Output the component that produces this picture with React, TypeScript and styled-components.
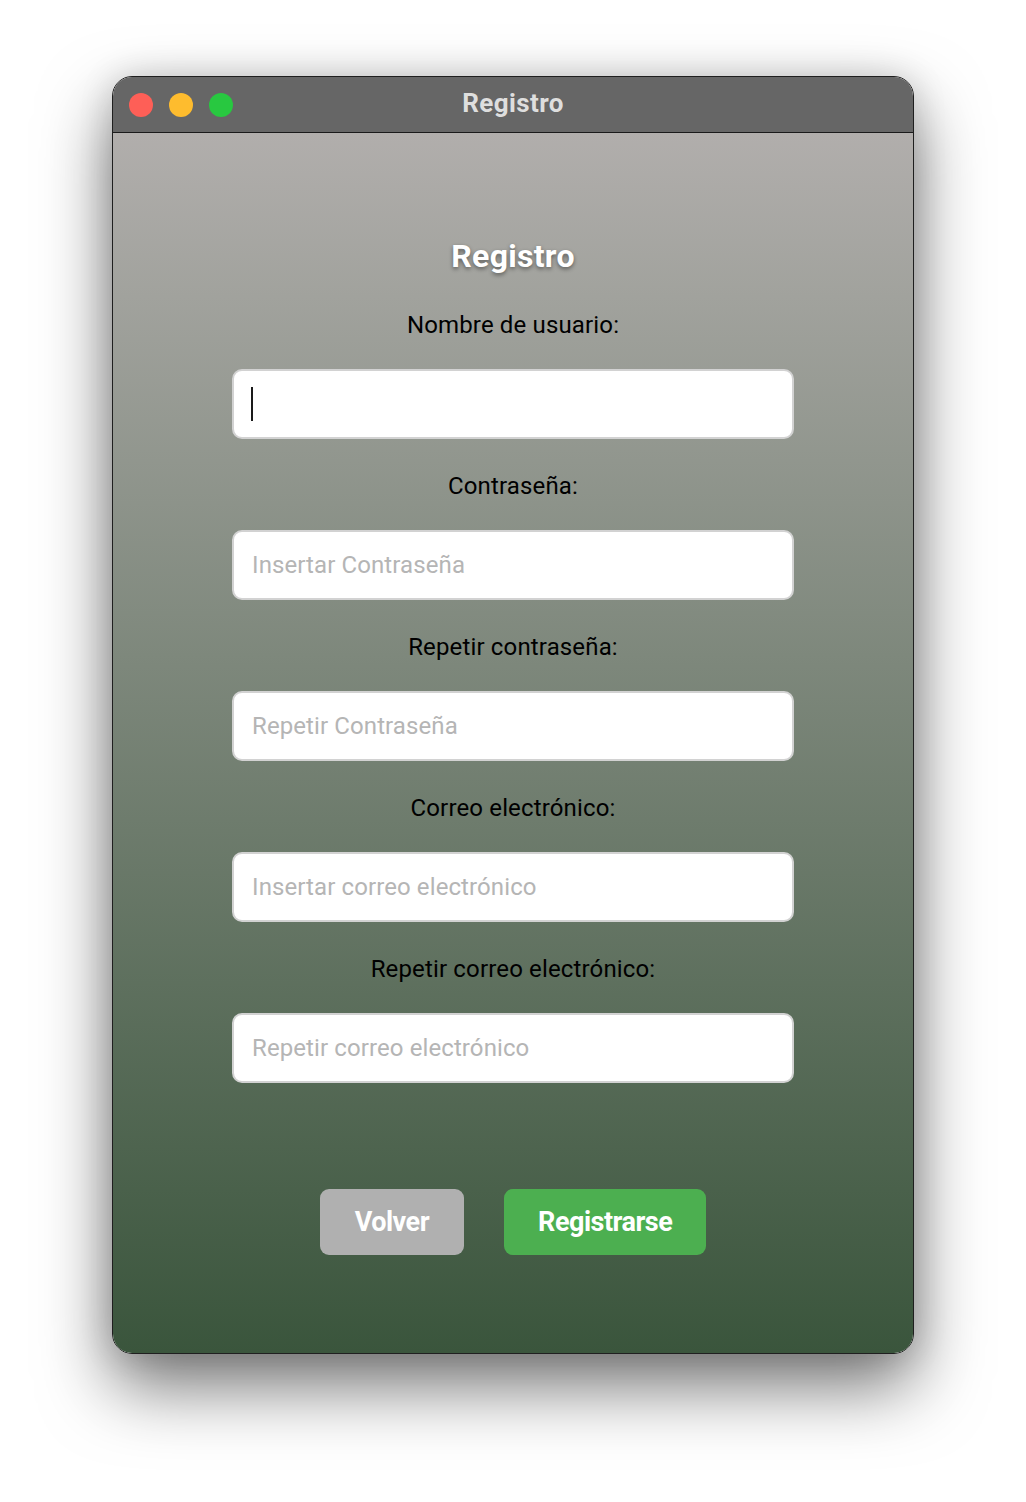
import * as React from "react";
import styled, { createGlobalStyle } from "styled-components";

const GlobalStyle = createGlobalStyle`
  html, body {
    margin: 0;
    padding: 0;
    background: #ffffff;
  }
  body {
    font-family: Roboto, "Liberation Sans", sans-serif;
  }
`;

const Desktop = styled.div`
  width: 1026px;
  height: 1502px;
  padding: 76px 0 0 112px;
  box-sizing: border-box;
`;

const Window = styled.div`
  width: 802px;
  height: 1278px;
  display: flex;
  flex-direction: column;
  border-radius: 20px;
  overflow: hidden;
  box-sizing: border-box;
  border: 1px solid #1f1f1f;
  box-shadow: inset 0 0 0 1px rgba(255, 255, 255, 0.18),
    0 32px 70px rgba(0, 0, 0, 0.55), 0 0 34px rgba(0, 0, 0, 0.14);
`;

const TitleBar = styled.div`
  height: 56px;
  flex-shrink: 0;
  display: grid;
  grid-template-columns: 1fr auto 1fr;
  align-items: center;
  background: #666666;
  border-bottom: 1px solid #1a1a1a;
  box-sizing: border-box;
`;

const Lights = styled.div`
  display: flex;
  gap: 16px;
  padding-left: 16px;
`;

const Light = styled.span<{ $color: string }>`
  width: 24px;
  height: 24px;
  border-radius: 50%;
  background: ${(p) => p.$color};
`;

const WindowTitle = styled.div`
  margin-bottom: 4px;
  font-size: 26px;
  font-weight: 700;
  letter-spacing: 0.4px;
  color: #dedede;
`;

const Body = styled.div`
  flex: 1;
  display: flex;
  flex-direction: column;
  align-items: center;
  padding-top: 103px;
  background: linear-gradient(180deg, #b1aeac 0%, #3a553c 100%);
`;

const Heading = styled.h1`
  margin: 0 0 34px;
  font-size: 32px;
  line-height: 40px;
  font-weight: 700;
  letter-spacing: 0.3px;
  color: #ffffff;
  text-shadow: 0 2px 4px rgba(0, 0, 0, 0.45);
`;

const Field = styled.div`
  display: flex;
  flex-direction: column;
  align-items: center;
  margin-bottom: 32px;
`;

const Label = styled.label`
  font-size: 24px;
  line-height: 30px;
  letter-spacing: 0.15px;
  color: #000000;
  margin-bottom: 29px;
`;

const InputBox = styled.div`
  position: relative;
  width: 562px;
  height: 70px;
`;

const TextInput = styled.input`
  width: 100%;
  height: 100%;
  box-sizing: border-box;
  padding: 0 18px;
  border: 2px solid #d2d2d2;
  border-radius: 10px;
  background: #ffffff;
  font-family: Roboto, "Liberation Sans", sans-serif;
  font-size: 24px;
  letter-spacing: 0.1px;
  color: #222;
  outline: none;

  &::placeholder {
    color: #b5b5b5;
  }
`;

const Caret = styled.span`
  position: absolute;
  left: 19px;
  top: 18px;
  width: 2px;
  height: 34px;
  background: #1a1a1a;
`;

const Actions = styled.div`
  display: flex;
  gap: 40px;
  margin-top: 74px;
`;

const Button = styled.button<{ $primary?: boolean }>`
  height: 66px;
  padding: 0 ${(p) => (p.$primary ? "34px" : "35px")};
  border: none;
  border-radius: 9px;
  background: ${(p) => (p.$primary ? "#4caf50" : "#b0b0b0")};
  color: #ffffff;
  font-family: Roboto, "Liberation Sans", sans-serif;
  font-size: 27px;
  font-weight: 700;
  letter-spacing: -0.5px;
  cursor: pointer;
`;

const fields = [
  { id: "usuario", label: "Nombre de usuario:", placeholder: "", caret: true },
  { id: "pass", label: "Contraseña:", placeholder: "Insertar Contraseña" },
  { id: "pass2", label: "Repetir contraseña:", placeholder: "Repetir Contraseña" },
  { id: "mail", label: "Correo electrónico:", placeholder: "Insertar correo electrónico" },
  { id: "mail2", label: "Repetir correo electrónico:", placeholder: "Repetir correo electrónico" },
];

export default function App() {
  return (
    <>
      <GlobalStyle />
      <Desktop>
        <Window>
          <TitleBar>
            <Lights>
              <Light $color="#fe5f57" />
              <Light $color="#febc2e" />
              <Light $color="#28c840" />
            </Lights>
            <WindowTitle>Registro</WindowTitle>
            <span />
          </TitleBar>
          <Body>
            <Heading>Registro</Heading>
            {fields.map((f) => (
              <Field key={f.id}>
                <Label htmlFor={f.id}>{f.label}</Label>
                <InputBox>
                  <TextInput id={f.id} placeholder={f.placeholder} />
                  {f.caret && <Caret />}
                </InputBox>
              </Field>
            ))}
            <Actions>
              <Button>Volver</Button>
              <Button $primary>Registrarse</Button>
            </Actions>
          </Body>
        </Window>
      </Desktop>
    </>
  );
}
